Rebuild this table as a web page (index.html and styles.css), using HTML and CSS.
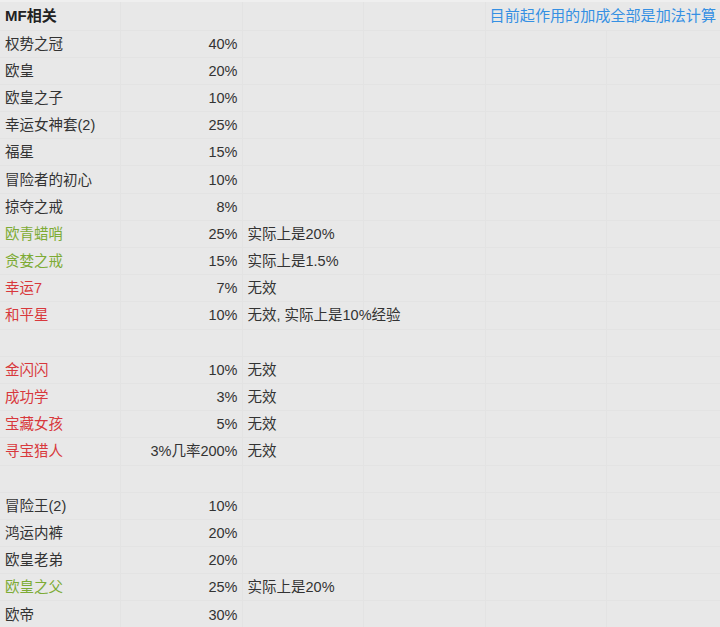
FILE: index.html
```html
<!DOCTYPE html>
<html lang="zh-CN">
<head>
<meta charset="utf-8">
<title>MF相关</title>
<link rel="stylesheet" href="styles.css">
</head>
<body>
<table class="sheet">
  <colgroup>
    <col class="c1"><col class="c2"><col class="c3"><col class="c4"><col class="c5"><col class="c6">
  </colgroup>
  <tr class="head">
    <td class="title">MF相关</td><td></td><td></td><td></td>
    <td colspan="2"><div class="note-blue"><span>目前起作用的加成全部是加法计算</span></div></td>
  </tr>
  <tr><td class="name">权势之冠</td><td class="val">40%</td><td></td><td></td><td></td><td></td></tr>
  <tr><td class="name">欧皇</td><td class="val">20%</td><td></td><td></td><td></td><td></td></tr>
  <tr><td class="name">欧皇之子</td><td class="val">10%</td><td></td><td></td><td></td><td></td></tr>
  <tr><td class="name">幸运女神套(2)</td><td class="val">25%</td><td></td><td></td><td></td><td></td></tr>
  <tr><td class="name">福星</td><td class="val">15%</td><td></td><td></td><td></td><td></td></tr>
  <tr><td class="name">冒险者的初心</td><td class="val">10%</td><td></td><td></td><td></td><td></td></tr>
  <tr><td class="name">掠夺之戒</td><td class="val">8%</td><td></td><td></td><td></td><td></td></tr>
  <tr><td class="name green">欧青蜡哨</td><td class="val">25%</td><td class="note">实际上是20%</td><td></td><td></td><td></td></tr>
  <tr><td class="name green">贪婪之戒</td><td class="val">15%</td><td class="note">实际上是1.5%</td><td></td><td></td><td></td></tr>
  <tr><td class="name red">幸运7</td><td class="val">7%</td><td class="note">无效</td><td></td><td></td><td></td></tr>
  <tr><td class="name red">和平星</td><td class="val">10%</td><td class="note">无效, 实际上是10%经验</td><td></td><td></td><td></td></tr>
  <tr><td></td><td></td><td></td><td></td><td></td><td></td></tr>
  <tr><td class="name red">金闪闪</td><td class="val">10%</td><td class="note">无效</td><td></td><td></td><td></td></tr>
  <tr><td class="name red">成功学</td><td class="val">3%</td><td class="note">无效</td><td></td><td></td><td></td></tr>
  <tr><td class="name red">宝藏女孩</td><td class="val">5%</td><td class="note">无效</td><td></td><td></td><td></td></tr>
  <tr><td class="name red">寻宝猎人</td><td class="val">3%几率200%</td><td class="note">无效</td><td></td><td></td><td></td></tr>
  <tr><td></td><td></td><td></td><td></td><td></td><td></td></tr>
  <tr><td class="name">冒险王(2)</td><td class="val">10%</td><td></td><td></td><td></td><td></td></tr>
  <tr><td class="name">鸿运内裤</td><td class="val">20%</td><td></td><td></td><td></td><td></td></tr>
  <tr><td class="name">欧皇老弟</td><td class="val">20%</td><td></td><td></td><td></td><td></td></tr>
  <tr><td class="name green">欧皇之父</td><td class="val">25%</td><td class="note">实际上是20%</td><td></td><td></td><td></td></tr>
  <tr><td class="name">欧帝</td><td class="val">30%</td><td></td><td></td><td></td><td></td></tr>
</table>
</body>
</html>
```
FILE: styles.css
```css
html, body {
  margin: 0;
  padding: 0;
  background: #e8e8e8;
}

body {
  width: 720px;
  height: 627px;
  overflow: hidden;
  font-family: "Liberation Sans", "Noto Sans CJK SC", sans-serif;
  color: #333333;
}

.sheet {
  width: 720px;
  table-layout: fixed;
  border-collapse: collapse;
  font-size: 14.5px;
}

.c1 { width: 120px; }
.c2 { width: 122px; }
.c3 { width: 121px; }
.c4 { width: 122px; }
.c5 { width: 121px; }
.c6 { width: 114px; }

.sheet td {
  height: 27.2px;
  padding: 0;
  border-right: 1px solid #e3e3e3;
  border-bottom: 1px solid #e3e3e3;
  white-space: nowrap;
  overflow: visible;
  vertical-align: middle;
  line-height: 16px;
  box-sizing: border-box;
}

.sheet tr.head td {
  height: 29px;
  border-top: 2px solid #efefef;
}

.sheet td:last-child {
  border-right: none;
}

.title {
  padding-left: 5px !important;
  font-size: 15px;
  font-weight: bold;
  color: #222222;
}

.note-blue {
  display: flex;
  justify-content: flex-end;
  padding-right: 4px;
  font-size: 15.1px;
  color: #3590e3;
  white-space: nowrap;
}

.name {
  padding-left: 5px !important;
}

.val {
  text-align: right;
  padding-right: 4px !important;
}

.note {
  padding-left: 5px !important;
}

.green { color: #7dab35; }
.red { color: #d8383c; }
```
